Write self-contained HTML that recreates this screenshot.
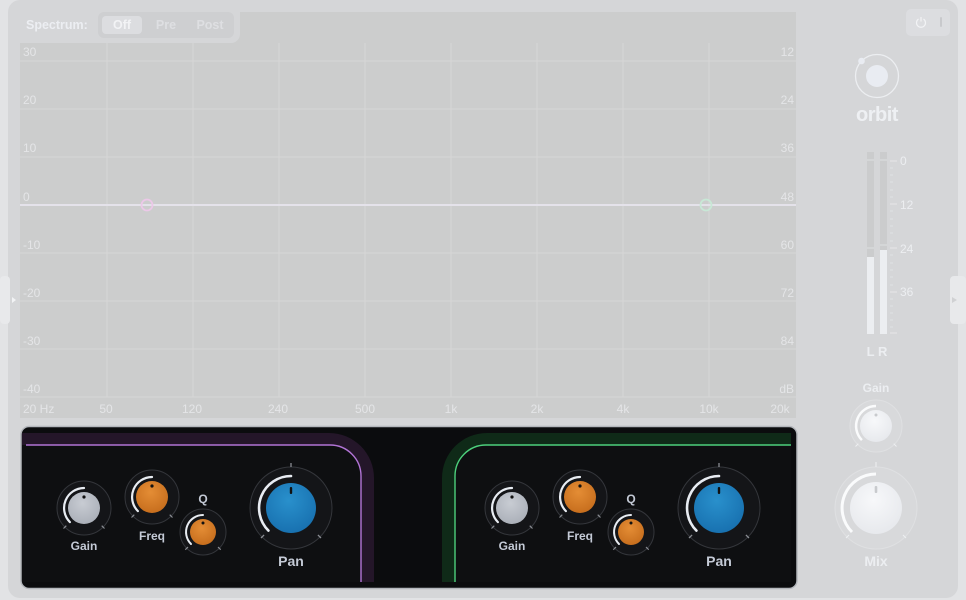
<!DOCTYPE html>
<html><head><meta charset="utf-8"><style>
html,body{margin:0;padding:0;background:#e2e3e5;width:966px;height:600px;overflow:hidden}
svg{display:block}
text{font-family:"Liberation Sans",sans-serif}
</style></head><body>
<svg width="966" height="600" viewBox="0 0 966 600" xmlns="http://www.w3.org/2000/svg">
<defs>
<radialGradient id="gOr" cx="45%" cy="35%" r="70%"><stop offset="0" stop-color="#e48d35"/><stop offset="1" stop-color="#c56c1c"/></radialGradient>
<radialGradient id="gBl" cx="45%" cy="35%" r="70%"><stop offset="0" stop-color="#2990cc"/><stop offset="1" stop-color="#176fae"/></radialGradient>
<radialGradient id="gGr" cx="45%" cy="35%" r="70%"><stop offset="0" stop-color="#c8ccd3"/><stop offset="1" stop-color="#a9aeb7"/></radialGradient>
<radialGradient id="gWh" cx="45%" cy="35%" r="70%"><stop offset="0" stop-color="#f7f8fa"/><stop offset="1" stop-color="#e6e8ec"/></radialGradient>
<g id="k20"><circle r="27" fill="#141518" stroke="#34363b"/><path d="M-14.1,14.1 A20,20 0 0 1 0,-20" fill="none" stroke="#e8ecf2" stroke-width="2.2" stroke-linecap="round"/><path d="M-17.7,17.7 L-20.5,20.5 M17.7,17.7 L20.5,20.5" stroke="#8a8d93" stroke-width="1.2"/></g>
<g id="k17"><circle r="23" fill="#141518" stroke="#34363b"/><path d="M-12,12 A17,17 0 0 1 0,-17" fill="none" stroke="#e8ecf2" stroke-width="2" stroke-linecap="round"/><path d="M-15,15 L-17.7,17.7 M15,15 L17.7,17.7" stroke="#8a8d93" stroke-width="1.2"/></g>
<g id="k32"><circle r="41" fill="#141518" stroke="#34363b"/><path d="M-22.6,22.6 A32,32 0 0 1 0,-32" fill="none" stroke="#e8ecf2" stroke-width="2.6" stroke-linecap="round"/><path d="M-26.9,26.9 L-30,30 M26.9,26.9 L30,30 M0,-41 L0,-45" stroke="#8a8d93" stroke-width="1.3"/></g>
</defs>
<rect x="8" y="0" width="950" height="598" rx="12" fill="#d5d6d8"/>
<rect x="0" y="276" width="10" height="48" rx="4" fill="#e8e9eb"/>
<path d="M12,297 l4,3 l-4,3z" fill="#f2f3f5"/>
<rect x="950" y="276" width="16" height="48" rx="4" fill="#e8e9eb"/>
<path d="M952,297 l5,3 l-5,3z" fill="#d0d1d3"/>
<rect x="20" y="12" width="776" height="406" fill="#cccdcd"/>
<path d="M20,12 H240 V34 a9,9 0 0 1 -9,9 H20z" fill="#d5d6d8"/>
<g stroke="#d6d7d7" stroke-width="1">
<path d="M20,61H796M20,109H796M20,157H796M20,253H796M20,301H796M20,349H796M20,397H796"/>
<path d="M107,43V397M193,43V397M279,43V397M365,43V397M451,43V397M537,43V397M623,43V397M709,43V397"/>
</g>
<path d="M20,205H796" stroke="#e4e2ea" stroke-width="2"/>
<circle cx="147" cy="205" r="5.5" fill="none" stroke="#ecc8e8" stroke-width="1.8"/>
<circle cx="706" cy="205" r="5.5" fill="none" stroke="#c8e8d6" stroke-width="1.8"/>
<g fill="#e4e5e7" font-size="12">
<text x="23" y="56">30</text><text x="23" y="104">20</text><text x="23" y="152">10</text><text x="23" y="201">0</text>
<text x="23" y="249">-10</text><text x="23" y="297">-20</text><text x="23" y="345">-30</text><text x="23" y="393">-40</text>
<g text-anchor="end"><text x="794" y="56">12</text><text x="794" y="104">24</text><text x="794" y="152">36</text><text x="794" y="201">48</text><text x="794" y="249">60</text><text x="794" y="297">72</text><text x="794" y="345">84</text><text x="794" y="393">dB</text></g>
<text x="23" y="413">20 Hz</text>
<g text-anchor="middle"><text x="106" y="413">50</text><text x="192" y="413">120</text><text x="278" y="413">240</text><text x="365" y="413">500</text><text x="451" y="413">1k</text><text x="537" y="413">2k</text><text x="623" y="413">4k</text><text x="709" y="413">10k</text><text x="780" y="413">20k</text></g>
</g>
<text x="26" y="29" fill="#eceef2" font-size="12.5" font-weight="bold">Spectrum:</text>
<rect x="98" y="12" width="136" height="26" rx="6" fill="#cecfd1"/>
<rect x="102" y="16" width="40" height="18" rx="4" fill="#dcdde0"/>
<g font-size="12.5" font-weight="bold" text-anchor="middle"><text x="122" y="29" fill="#f2f3f5">Off</text><text x="166" y="29" fill="#dedfe2">Pre</text><text x="210" y="29" fill="#dedfe2">Post</text></g>
<rect x="21" y="426.5" width="776" height="162" rx="8" fill="#0b0c0e" stroke="#b4b7bc" stroke-width="1.5"/>
<path d="M22,433 H329 a45,45 0 0 1 45,45 V582 H22z" fill="#241629"/>
<path d="M22,445 H330 a31,31 0 0 1 31,31 V582 H22z" fill="#0e0f11"/>
<path d="M26,445 H330 a31,31 0 0 1 31,31 V582" fill="none" stroke="#b274d6" stroke-width="1.4"/>
<path d="M791,433 H487 a45,45 0 0 0 -45,45 V582 H791z" fill="#0f2a18"/>
<path d="M791,445 H486 a31,31 0 0 0 -31,31 V582 H791z" fill="#0e0f11"/>
<path d="M791,445 H486 a31,31 0 0 0 -31,31 V582" fill="none" stroke="#4dd07c" stroke-width="1.4"/>
<g transform="translate(84,508)"><use href="#k20"/><circle r="16" fill="url(#gGr)"/><circle cx="0" cy="-11" r="1.6" fill="#111"/></g>
<g transform="translate(152,497)"><use href="#k20"/><circle r="16" fill="url(#gOr)"/><circle cx="0" cy="-11" r="1.6" fill="#111"/></g>
<g transform="translate(203,532)"><use href="#k17"/><circle r="13" fill="url(#gOr)"/><circle cx="0" cy="-9" r="1.5" fill="#111"/></g>
<g transform="translate(291,508)"><use href="#k32"/><circle r="25" fill="url(#gBl)"/><rect x="-1.2" y="-21" width="2.4" height="7" rx="1" fill="#111"/></g>
<g transform="translate(512,508)"><use href="#k20"/><circle r="16" fill="url(#gGr)"/><circle cx="0" cy="-11" r="1.6" fill="#111"/></g>
<g transform="translate(580,497)"><use href="#k20"/><circle r="16" fill="url(#gOr)"/><circle cx="0" cy="-11" r="1.6" fill="#111"/></g>
<g transform="translate(631,532)"><use href="#k17"/><circle r="13" fill="url(#gOr)"/><circle cx="0" cy="-9" r="1.5" fill="#111"/></g>
<g transform="translate(719,508)"><use href="#k32"/><circle r="25" fill="url(#gBl)"/><rect x="-1.2" y="-21" width="2.4" height="7" rx="1" fill="#111"/></g>
<g fill="#c4cad6" font-size="12" font-weight="bold" text-anchor="middle">
<text x="84" y="550">Gain</text><text x="152" y="540">Freq</text><text x="203" y="503">Q</text><text x="291" y="566" font-size="14">Pan</text>
<text x="512" y="550">Gain</text><text x="580" y="540">Freq</text><text x="631" y="503">Q</text><text x="719" y="566" font-size="14">Pan</text>
</g>
<rect x="906" y="9" width="44" height="27" rx="5" fill="#dcdde0"/>
<path d="M918.5,19 a4.5,4.5 0 1 0 5,0" fill="none" stroke="#f2f3f5" stroke-width="1.2"/>
<path d="M921,17 V21.5" stroke="#f2f3f5" stroke-width="1.2"/>
<rect x="940" y="17" width="2" height="10" rx="1" fill="#c8c9cc"/>
<circle cx="877" cy="76" r="21.5" fill="none" stroke="#eceef1" stroke-width="1.3"/>
<circle cx="877" cy="76" r="11" fill="#e9ecf2"/>
<circle cx="861.5" cy="61" r="3.3" fill="#e9ecf2"/>
<text x="877" y="121" fill="#eef0f3" font-size="20" font-weight="bold" text-anchor="middle" letter-spacing="-0.5">orbit</text>
<rect x="867" y="152" width="7" height="182" fill="#cbcccd"/>
<rect x="880" y="152" width="7" height="182" fill="#cbcccd"/>
<rect x="867" y="257" width="7" height="77" fill="#eceef1"/>
<rect x="880" y="250" width="7" height="84" fill="#eceef1"/>
<path d="M867,160H874M880,160H887M867,248H874M880,245H887" stroke="#dedfe1"/>
<path d="M890,161H897M890,204H897M890,248H897M890,292H897M890,333H897" stroke="#e6e7e9"/>
<path d="M890,168h3M890,175h3M890,182h3M890,190h3M890,197h3M890,211h3M890,219h3M890,226h3M890,233h3M890,241h3M890,255h3M890,263h3M890,270h3M890,277h3M890,285h3M890,299h3M890,306h3M890,313h3M890,320h3M890,327h3" stroke="#e0e1e3"/>
<g fill="#eceef1" font-size="12"><text x="900" y="165">0</text><text x="900" y="209">12</text><text x="900" y="253">24</text><text x="900" y="296">36</text></g>
<text x="877" y="356" fill="#eceef1" font-size="13" font-weight="bold" text-anchor="middle">L R</text>
<text x="876" y="392" fill="#eceef1" font-size="12" font-weight="bold" text-anchor="middle">Gain</text>
<g transform="translate(876,426)"><circle r="26" fill="#d8d9db" stroke="#dfe0e2"/><path d="M-14.1,14.1 A20,20 0 0 1 0,-20" fill="none" stroke="#fafbfc" stroke-width="2.5"/><path d="M-17.7,17.7 L-20.5,20.5 M17.7,17.7 L20.5,20.5" stroke="#eef0f2"/><circle r="16" fill="url(#gWh)"/><circle cy="-11" r="1.5" fill="#c8cacd"/></g>
<g transform="translate(876,508)"><circle r="41" fill="#d8d9db" stroke="#dfe0e2"/><path d="M-24,24 A34,34 0 0 1 0,-34" fill="none" stroke="#fafbfc" stroke-width="3"/><path d="M-27,27 L-30,30 M27,27 L30,30 M0,-41 L0,-46" stroke="#eef0f2"/><circle r="26" fill="url(#gWh)"/><rect x="-1.3" y="-22" width="2.6" height="7" rx="1" fill="#c8cacd"/></g>
<text x="876" y="566" fill="#eceef1" font-size="14" font-weight="bold" text-anchor="middle">Mix</text>
</svg>
</body></html>
